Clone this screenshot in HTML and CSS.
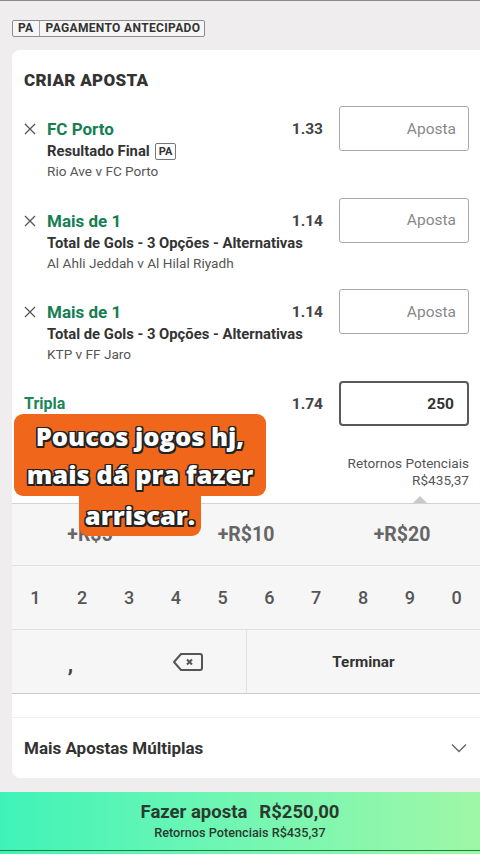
FILE: index.html
```html
<!DOCTYPE html>
<html lang="pt-BR">
<head>
<meta charset="utf-8">
<link rel="stylesheet" href="styles.css">
</head>
<body>
<div class="page">
  <div class="topbar">
    <span class="pa-badge"><span class="pa-short">PA</span><span class="pa-long">PAGAMENTO ANTECIPADO</span></span>
  </div>

  <div class="card">
    <h2 class="card-title">CRIAR APOSTA</h2>

    <div class="selections">
      <div class="sel">
        <svg class="x-icon" viewBox="0 0 12 12" width="12" height="12"><path d="M1 1L11 11M11 1L1 11" stroke="#555" stroke-width="1.3" fill="none"/></svg>
        <div class="sel-info">
          <div class="sel-head"><span class="sel-name">FC Porto</span><span class="odds">1.33</span></div>
          <div class="sel-market">Resultado Final <span class="pa-tag">PA</span></div>
          <div class="sel-match">Rio Ave v FC Porto</div>
        </div>
        <div class="stake">Aposta</div>
      </div>

      <div class="sel">
        <svg class="x-icon" viewBox="0 0 12 12" width="12" height="12"><path d="M1 1L11 11M11 1L1 11" stroke="#555" stroke-width="1.3" fill="none"/></svg>
        <div class="sel-info">
          <div class="sel-head"><span class="sel-name">Mais de 1</span><span class="odds">1.14</span></div>
          <div class="sel-market">Total de Gols - 3 Opções - Alternativas</div>
          <div class="sel-match">Al Ahli Jeddah v Al Hilal Riyadh</div>
        </div>
        <div class="stake">Aposta</div>
      </div>

      <div class="sel">
        <svg class="x-icon" viewBox="0 0 12 12" width="12" height="12"><path d="M1 1L11 11M11 1L1 11" stroke="#555" stroke-width="1.3" fill="none"/></svg>
        <div class="sel-info">
          <div class="sel-head"><span class="sel-name">Mais de 1</span><span class="odds">1.14</span></div>
          <div class="sel-market">Total de Gols - 3 Opções - Alternativas</div>
          <div class="sel-match">KTP v FF Jaro</div>
        </div>
        <div class="stake">Aposta</div>
      </div>

      <div class="multi">
        <div class="multi-name">Tripla</div>
        <div class="odds">1.74</div>
        <div class="stake stake-active">250</div>
      </div>
    </div>

    <div class="returns">
      <div>Retornos Potenciais</div>
      <div>R$435,37</div>
    </div>

    <div class="keypad">
      <div class="quick-row">
        <div class="key quick">+R$5</div>
        <div class="key quick">+R$10</div>
        <div class="key quick">+R$20</div>
      </div>
      <div class="num-row">
        <div class="key num">1</div>
        <div class="key num">2</div>
        <div class="key num">3</div>
        <div class="key num">4</div>
        <div class="key num">5</div>
        <div class="key num">6</div>
        <div class="key num">7</div>
        <div class="key num">8</div>
        <div class="key num">9</div>
        <div class="key num">0</div>
      </div>
      <div class="action-row">
        <div class="action-left">
          <div class="key comma">,</div>
          <div class="key">
            <svg viewBox="0 0 32 20" width="32" height="20"><path d="M9 2H28a2 2 0 0 1 2 2V16a2 2 0 0 1-2 2H9L2 10Z" fill="none" stroke="#555" stroke-width="2" stroke-linejoin="round"/><path d="M15 7.5L20 12.5M20 7.5L15 12.5" stroke="#555" stroke-width="2"/></svg>
          </div>
        </div>
        <div class="key done">Terminar</div>
      </div>
    </div>

    <div class="card-gap"></div>

    <div class="more">
      <span>Mais Apostas Múltiplas</span>
      <svg viewBox="0 0 16 10" width="16" height="10"><path d="M1 1.5L8 8.5L15 1.5" fill="none" stroke="#666" stroke-width="1.4"/></svg>
    </div>
  </div>

  <div class="betbar">
    <div class="bet-main"><span>Fazer aposta</span><span>R$250,00</span></div>
    <div class="bet-sub">Retornos Potenciais R$435,37</div>
  </div>

  <div class="caption">
    <div class="cap-top">Poucos jogos hj,<br>mais dá pra fazer</div>
    <div class="cap-bottom">arriscar.</div>
  </div>
</div>
</body>
</html>
```
FILE: styles.css
```css
* { box-sizing: border-box; }
html, body { margin: 0; padding: 0; }
body {
  width: 480px;
  height: 854px;
  overflow: hidden;
  background: #efeded;
  font-family: Roboto, "Liberation Sans", Arial, sans-serif;
  color: #333;
}
.page {
  position: relative;
  width: 480px;
  height: 854px;
  display: flex;
  flex-direction: column;
}
.page > * { flex: none; }
.topbar {
  height: 50px;
  border-top: 1px solid #8a8888;
  padding: 16px 0 0 12px;
}
.pa-badge {
  display: inline-flex;
  height: 17px;
  border: 1px solid #8d8d8d;
  border-radius: 2px;
  background: #f7f6f6;
  font-size: 12px;
  font-weight: 700;
  line-height: 15px;
  color: #333;
  letter-spacing: 0.35px;
}
.pa-short {
  padding: 0 5px 0 5px;
  border-right: 1px solid #a5a5a5;
}
.pa-long { padding: 0 4px 0 6px; }

.card {
  margin-left: 12px;
  background: #fff;
  border-radius: 8px 0 0 8px;
  display: flex;
  flex-direction: column;
}
.card-title {
  margin: 0;
  padding: 19px 0 0 12px;
  font-size: 17px;
  line-height: 22px;
  font-weight: 900;
  letter-spacing: 0.3px;
  color: #333;
  height: 56px;
}
.selections {
  display: flex;
  flex-direction: column;
  gap: 16.7px;
  padding: 0 11px 0 12px;
}
.sel {
  display: flex;
  align-items: flex-start;
}
.x-icon {
  flex: none;
  margin-top: 17px;
  margin-right: 11px;
}
.sel-info { flex: 1; min-width: 0; }
.sel-head {
  display: flex;
  justify-content: space-between;
  align-items: center;
  margin-top: 12px;
  height: 22px;
}
.sel-name {
  font-size: 17px;
  line-height: 22px;
  font-weight: 700;
  color: #157e52;
}
.sel-market {
  font-size: 14.8px;
  line-height: 22px;
  font-weight: 700;
  color: #333;
  display: flex;
  align-items: center;
  gap: 5px;
  white-space: nowrap;
}
.pa-tag {
  display: inline-block;
  font-size: 11px;
  line-height: 15px;
  padding: 0 3px;
  border: 1px solid #777;
  border-radius: 2px;
}
.sel-match {
  font-size: 13.6px;
  line-height: 19px;
  color: #555;
}
.odds {
  font-size: 15.5px;
  line-height: 22px;
  font-weight: 700;
  color: #444;
}
.stake {
  flex: none;
  margin-left: 16px;
  width: 130px;
  height: 45px;
  border: 1px solid #a9a9a9;
  border-radius: 3px;
  padding-right: 12px;
  display: flex;
  align-items: center;
  justify-content: flex-end;
  font-size: 15.5px;
  color: #888;
}
.stake-active {
  border: 2px solid #595959;
  border-radius: 4px;
  color: #333;
  font-weight: 700;
  padding-right: 13px;
}
.multi {
  display: flex;
  align-items: center;
}
.multi-name {
  flex: 1;
  font-size: 16px;
  font-weight: 700;
  color: #208659;
}
.returns {
  margin-top: 29px;
  padding-right: 11px;
  text-align: right;
  font-size: 13.6px;
  line-height: 17px;
  color: #555;
  height: 48px;
}
.keypad {
  position: relative;
  background: #f6f6f6;
  border-top: 1px solid #d4d4d4;
  border-bottom: 1px solid #cdcdcd;
}
.keypad::before {
  content: "";
  position: absolute;
  top: -8px;
  left: 401px;
  border: 7px solid transparent;
  border-bottom-color: #c9c9c9;
  border-top: 0;
}
.key {
  display: flex;
  align-items: center;
  justify-content: center;
}
.quick-row {
  display: grid;
  grid-template-columns: repeat(3, 1fr);
  height: 62px;
  border-bottom: 1px solid #e0e0e0;
}
.quick {
  font-size: 19.5px;
  font-weight: 700;
  color: #666;
}
.num-row {
  display: grid;
  grid-template-columns: repeat(10, 1fr);
  height: 64px;
  border-bottom: 1px solid #e0e0e0;
}
.num {
  font-size: 18px;
  font-weight: 500;
  color: #555;
}
.action-row {
  display: grid;
  grid-template-columns: 235px 1fr;
  height: 63px;
}
.action-left {
  display: grid;
  grid-template-columns: 1fr 1fr;
  border-right: 1px solid #e2e2e2;
}
.comma {
  font-size: 22px;
  font-weight: 700;
  color: #444;
  padding-top: 6px;
}
.done {
  font-size: 15.3px;
  font-weight: 700;
  color: #333;
}
.card-gap {
  height: 24px;
  border-bottom: 1px solid #f0f0f0;
}
.more {
  height: 60px;
  padding: 0 13px 0 12px;
  display: flex;
  align-items: center;
  justify-content: space-between;
  font-size: 17px;
  font-weight: 700;
  color: #333;
}
.betbar {
  margin-top: 14px;
  height: 62px;
  background:
    linear-gradient(#1f8040, #1f8040) 0 58px / 100% 1px no-repeat,
    linear-gradient(90deg, #3ff3b8 0%, #6ef6b4 45%, #9ff7a6 100%);
  display: flex;
  flex-direction: column;
  align-items: center;
  padding-top: 8px;
  color: #2b3a2f;
}
.bet-main {
  display: flex;
  gap: 12px;
  font-size: 18.5px;
  line-height: 24px;
  font-weight: 700;
}
.bet-sub {
  font-size: 12.7px;
  line-height: 18px;
  font-weight: 500;
}
.caption {
  position: absolute;
  left: 14px;
  top: 414px;
  width: 252px;
  display: flex;
  flex-direction: column;
  align-items: center;
  font-family: "Open Sans", Lato, sans-serif;
  font-weight: 800;
  font-size: 25.5px;
  line-height: 38px;
  color: #fff;
  text-align: center;
  text-shadow:
    -1.5px -1.5px 0 #222, 1.5px -1.5px 0 #222, -1.5px 1.5px 0 #222, 1.5px 1.5px 0 #222,
    0 -1.5px 0 #222, 0 1.5px 0 #222, -1.5px 0 0 #222, 1.5px 0 0 #222;
}
.cap-top {
  width: 252px;
  height: 82px;
  padding-top: 3px;
  background: #f0661b;
  border-radius: 9px;
}
.cap-bottom {
  width: 122px;
  height: 41px;
  margin-top: -1px;
  padding-top: 1px;
  background: #f0661b;
  border-radius: 0 0 9px 9px;
}
```
